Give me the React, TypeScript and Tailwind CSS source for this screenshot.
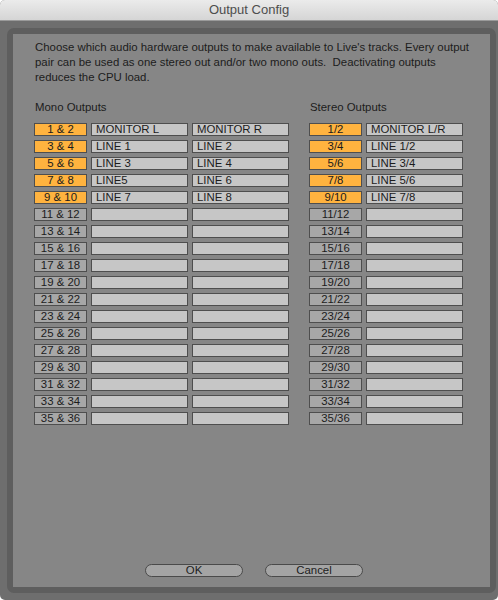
import React from 'react';

const FONT = { fontFamily: '"Liberation Sans", Arial, sans-serif' };

type MonoRow = { pair: string; left: string; right: string; on: boolean };
type StereoRow = { pair: string; name: string; on: boolean };

const monoNames: [string, string][] = [
  ['MONITOR L', 'MONITOR R'],
  ['LINE 1', 'LINE 2'],
  ['LINE 3', 'LINE 4'],
  ['LINE5', 'LINE 6'],
  ['LINE 7', 'LINE 8'],
];
const stereoNames = ['MONITOR L/R', 'LINE 1/2', 'LINE 3/4', 'LINE 5/6', 'LINE 7/8'];

const monoRows: MonoRow[] = Array.from({ length: 18 }, (_, i) => ({
  pair: `${i * 2 + 1} & ${i * 2 + 2}`,
  left: monoNames[i]?.[0] ?? '',
  right: monoNames[i]?.[1] ?? '',
  on: i < 5,
}));

const stereoRows: StereoRow[] = Array.from({ length: 18 }, (_, i) => ({
  pair: `${i * 2 + 1}/${i * 2 + 2}`,
  name: stereoNames[i] ?? '',
  on: i < 5,
}));

const PairToggle = ({ label, on }: { label: string; on: boolean }) => (
  <div
    className={`h-[13px] w-[53px] border border-[#4e4e4e] flex items-center justify-center text-[11.4px] leading-none text-[#1c1c1c] ${
      on ? 'bg-[#ffb33f]' : 'bg-[#a7a7a7]'
    }`}
  >
    {label}
  </div>
);

const NameField = ({ value }: { value: string }) => (
  <div className="h-[13px] w-[97px] border border-[#4e4e4e] bg-[#c6c6c6] flex items-center pl-[4px] text-[11.4px] leading-none text-[#1c1c1c]">
    {value}
  </div>
);

const DialogButton = ({ label }: { label: string }) => (
  <button className="h-[13px] w-[98px] rounded-full border border-[#4a4a4a] bg-[#a4a4a4] flex items-center justify-center text-[11.4px] leading-none text-[#1c1c1c]">
    {label}
  </button>
);

export default function App() {
  return (
    <div className="w-[498px] h-[600px] bg-white" style={FONT}>
      <div className="w-full h-full flex flex-col rounded-[5px] overflow-hidden bg-[#6e6e6e]">
        {/* title bar */}
        <div className="h-[21px] shrink-0 bg-gradient-to-b from-[#ebebeb] to-[#d5d5d5] border-b border-[#9a9a9a] flex items-center justify-center">
          <span className="text-[13px] text-[#4d4d4d]">Output Config</span>
        </div>

        <div className="flex-1 pt-[7px] pb-[7px] pl-[7px] pr-[6px] flex">
          <div className="flex-1 rounded-[7px] bg-[#5e5e5e] p-[6px] flex">
            <div className="flex-1 bg-[#868686] flex flex-col pt-[6px] pl-[21px] pr-[16px] pb-[10px] text-[#1c1c1c]">
              <p className="text-[11.4px] leading-[15px] pl-[1px] w-[440px]">
                Choose which audio hardware outputs to make available to Live's tracks. Every output pair can be used as one stereo out and/or two mono outs.&nbsp; Deactivating outputs reduces the CPU load.
              </p>

              <div className="flex gap-[20px] mt-[15px]">
                <div className="flex flex-col">
                  <div className="text-[11.4px] leading-[15px] pl-[1px] mb-[8px]">Mono Outputs</div>
                  <div className="flex flex-col gap-[4px]">
                    {monoRows.map((r) => (
                      <div key={r.pair} className="flex gap-[4px]">
                        <PairToggle label={r.pair} on={r.on} />
                        <NameField value={r.left} />
                        <NameField value={r.right} />
                      </div>
                    ))}
                  </div>
                </div>

                <div className="flex flex-col">
                  <div className="text-[11.4px] leading-[15px] pl-[1px] mb-[8px]">Stereo Outputs</div>
                  <div className="flex flex-col gap-[4px]">
                    {stereoRows.map((r) => (
                      <div key={r.pair} className="flex gap-[4px]">
                        <PairToggle label={r.pair} on={r.on} />
                        <NameField value={r.name} />
                      </div>
                    ))}
                  </div>
                </div>
              </div>

              <div className="mt-auto flex justify-center gap-[22px]">
                <DialogButton label="OK" />
                <DialogButton label="Cancel" />
              </div>
            </div>
          </div>
        </div>
      </div>
    </div>
  );
}
